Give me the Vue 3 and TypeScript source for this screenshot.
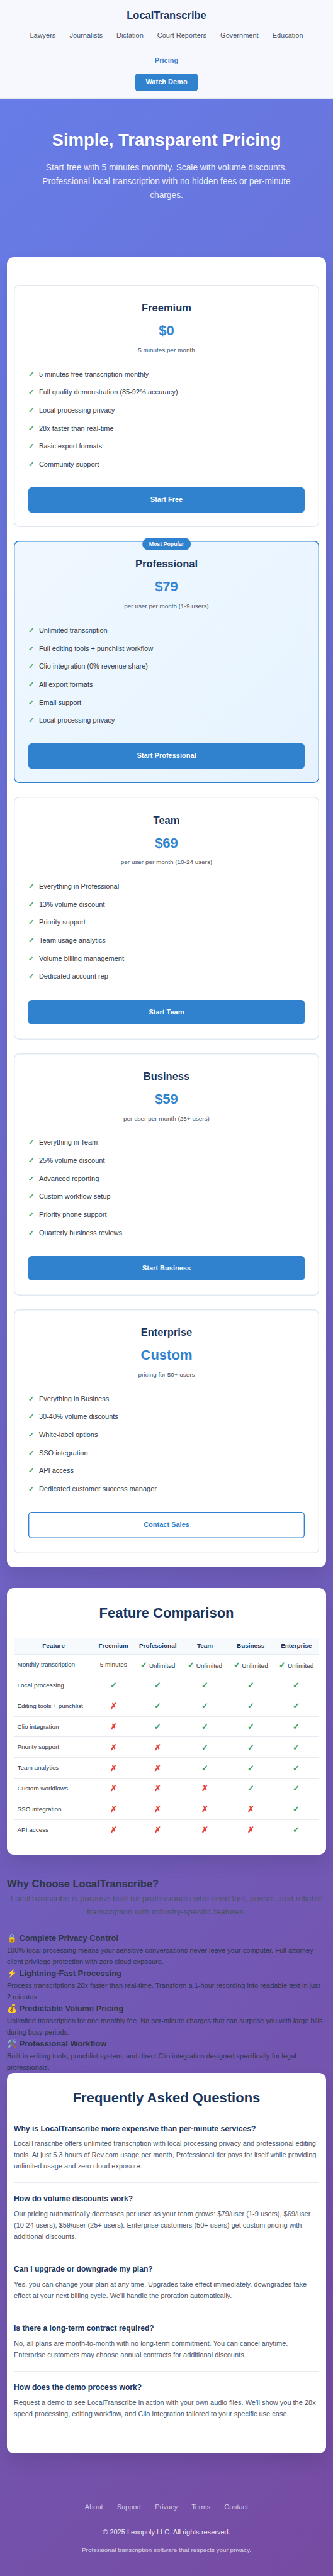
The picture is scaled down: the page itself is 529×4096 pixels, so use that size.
<script setup lang="ts">
interface Plan {
  name: string
  price: string
  period: string
  features: string[]
  cta: string
  popular?: boolean
  outline?: boolean
}

type Mark = 'y' | 'n'

interface FeatureRow {
  label: string
  marks: Mark[]
}

const navLinks: string[] = ['Lawyers', 'Journalists', 'Dictation', 'Court Reporters', 'Government', 'Education']

const plans: Plan[] = [
  {
    name: 'Freemium',
    price: '$0',
    period: '5 minutes per month',
    features: [
      '5 minutes free transcription monthly',
      'Full quality demonstration (85-92% accuracy)',
      'Local processing privacy',
      '28x faster than real-time',
      'Basic export formats',
      'Community support',
    ],
    cta: 'Start Free',
  },
  {
    name: 'Professional',
    price: '$79',
    period: 'per user per month (1-9 users)',
    features: [
      'Unlimited transcription',
      'Full editing tools + punchlist workflow',
      'Clio integration (0% revenue share)',
      'All export formats',
      'Email support',
      'Local processing privacy',
    ],
    cta: 'Start Professional',
    popular: true,
  },
  {
    name: 'Team',
    price: '$69',
    period: 'per user per month (10-24 users)',
    features: [
      'Everything in Professional',
      '13% volume discount',
      'Priority support',
      'Team usage analytics',
      'Volume billing management',
      'Dedicated account rep',
    ],
    cta: 'Start Team',
  },
  {
    name: 'Business',
    price: '$59',
    period: 'per user per month (25+ users)',
    features: [
      'Everything in Team',
      '25% volume discount',
      'Advanced reporting',
      'Custom workflow setup',
      'Priority phone support',
      'Quarterly business reviews',
    ],
    cta: 'Start Business',
  },
  {
    name: 'Enterprise',
    price: 'Custom',
    period: 'pricing for 50+ users',
    features: [
      'Everything in Business',
      '30-40% volume discounts',
      'White-label options',
      'SSO integration',
      'API access',
      'Dedicated customer success manager',
    ],
    cta: 'Contact Sales',
    outline: true,
  },
]

const columns: string[] = ['Feature', 'Freemium', 'Professional', 'Team', 'Business', 'Enterprise']

const row = (label: string, marks: string): FeatureRow => ({ label, marks: marks.split('') as Mark[] })

const rows: FeatureRow[] = [
  row('Local processing', 'yyyyy'),
  row('Editing tools + punchlist', 'nyyyy'),
  row('Clio integration', 'nyyyy'),
  row('Priority support', 'nnyyy'),
  row('Team analytics', 'nnyyy'),
  row('Custom workflows', 'nnnyy'),
  row('SSO integration', 'nnnny'),
  row('API access', 'nnnny'),
]

const reasons = [
  {
    title: '🔒 Complete Privacy Control',
    lines: [
      '100% local processing means your sensitive conversations never leave your computer. Full attorney-',
      'client privilege protection with zero cloud exposure.',
    ],
  },
  {
    title: '⚡ Lightning-Fast Processing',
    lines: [
      'Process transcriptions 28x faster than real-time. Transform a 1-hour recording into readable text in just',
      '2 minutes.',
    ],
  },
  {
    title: '💰 Predictable Volume Pricing',
    lines: [
      'Unlimited transcription for one monthly fee. No per-minute charges that can surprise you with large bills',
      'during busy periods.',
    ],
  },
  {
    title: '🛠️ Professional Workflow',
    lines: [
      'Built-in editing tools, punchlist system, and direct Clio integration designed specifically for legal',
      'professionals.',
    ],
  },
]

const faqs = [
  {
    q: 'Why is LocalTranscribe more expensive than per-minute services?',
    lines: [
      'LocalTranscribe offers unlimited transcription with local processing privacy and professional editing',
      'tools. At just 5.3 hours of Rev.com usage per month, Professional tier pays for itself while providing',
      'unlimited usage and zero cloud exposure.',
    ],
  },
  {
    q: 'How do volume discounts work?',
    lines: [
      'Our pricing automatically decreases per user as your team grows: $79/user (1-9 users), $69/user',
      '(10-24 users), $59/user (25+ users). Enterprise customers (50+ users) get custom pricing with',
      'additional discounts.',
    ],
  },
  {
    q: 'Can I upgrade or downgrade my plan?',
    lines: [
      'Yes, you can change your plan at any time. Upgrades take effect immediately, downgrades take',
      "effect at your next billing cycle. We'll handle the proration automatically.",
    ],
  },
  {
    q: 'Is there a long-term contract required?',
    lines: [
      'No, all plans are month-to-month with no long-term commitment. You can cancel anytime.',
      'Enterprise customers may choose annual contracts for additional discounts.',
    ],
  },
  {
    q: 'How does the demo process work?',
    lines: [
      "Request a demo to see LocalTranscribe in action with your own audio files. We'll show you the 28x",
      'speed processing, editing workflow, and Clio integration tailored to your specific use case.',
    ],
  },
]

const footerLinks: string[] = ['About', 'Support', 'Privacy', 'Terms', 'Contact']
</script>

<template>
  <div class="page">
    <header class="header">
      <div class="logo">LocalTranscribe</div>
      <nav class="nav">
        <a v-for="link in navLinks" :key="link">{{ link }}</a>
        <a class="active">Pricing</a>
      </nav>
      <a class="demo">Watch Demo</a>
    </header>

    <section class="hero">
      <h1>Simple, Transparent Pricing</h1>
      <p>
        Start free with 5 minutes monthly. Scale with volume discounts.<br />
        Professional local transcription with no hidden fees or per-minute<br />
        charges.
      </p>
    </section>

    <section class="card plans">
      <article v-for="plan in plans" :key="plan.name" class="plan" :class="{ popular: plan.popular }">
        <span v-if="plan.popular" class="badge">Most Popular</span>
        <h3>{{ plan.name }}</h3>
        <div class="price">{{ plan.price }}</div>
        <div class="period">{{ plan.period }}</div>
        <ul>
          <li v-for="feature in plan.features" :key="feature"><span class="tick">✓</span>{{ feature }}</li>
        </ul>
        <a class="cta" :class="{ outline: plan.outline }">{{ plan.cta }}</a>
      </article>
    </section>

    <section class="card compare">
      <h2>Feature Comparison</h2>
      <table>
        <colgroup>
          <col class="c-feature" />
          <col class="c-free" />
          <col class="c-pro" />
          <col class="c-rest" />
          <col class="c-rest" />
          <col class="c-rest" />
        </colgroup>
        <thead>
          <tr>
            <th v-for="column in columns" :key="column">{{ column }}</th>
          </tr>
        </thead>
        <tbody>
          <tr>
            <td>Monthly transcription</td>
            <td>5 minutes</td>
            <td v-for="n in 4" :key="n"><span class="yes">✓</span> Unlimited</td>
          </tr>
          <tr v-for="r in rows" :key="r.label">
            <td>{{ r.label }}</td>
            <td v-for="(mark, i) in r.marks" :key="i">
              <span :class="mark === 'y' ? 'yes' : 'no'">{{ mark === 'y' ? '✓' : '✗' }}</span>
            </td>
          </tr>
        </tbody>
      </table>
    </section>

    <section class="why">
      <h2>Why Choose LocalTranscribe?</h2>
      <p class="lead">
        LocalTranscribe is purpose-built for professionals who need fast, private, and reliable<br />
        transcription with industry-specific features.
      </p>
      <div v-for="reason in reasons" :key="reason.title">
        <h3>{{ reason.title }}</h3>
        <p><span v-for="line in reason.lines" :key="line" class="line">{{ line }}</span></p>
      </div>
    </section>

    <section class="card faq">
      <h2>Frequently Asked Questions</h2>
      <div v-for="item in faqs" :key="item.q" class="item">
        <h3>{{ item.q }}</h3>
        <p><span v-for="line in item.lines" :key="line" class="line">{{ line }}</span></p>
      </div>
    </section>

    <footer class="footer">
      <nav>
        <a v-for="link in footerLinks" :key="link">{{ link }}</a>
      </nav>
      <p>© 2025 Lexopoly LLC. All rights reserved.</p>
      <p class="tagline">Professional transcription software that respects your privacy.</p>
    </footer>
  </div>
</template>

<style>
html {
  font-size: 11.0126px;
}

body {
  margin: 0;
}
</style>

<style scoped>
.page {
  box-sizing: border-box;
  height: 4096px;
  overflow: hidden;
  background: linear-gradient(135deg, #667eea 0%, #764ba2 100%);
  color: #2d3748;
  font-family: "Liberation Sans", Arial, sans-serif;
  font-size: 1rem;
  line-height: 1.6;
}

.page *,
.page *::before {
  box-sizing: border-box;
}

h1,
h2,
h3,
p,
ul {
  margin: 0;
  padding: 0;
}

.line {
  display: block;
  white-space: nowrap;
}

.header {
  display: flex;
  flex-direction: column;
  align-items: center;
  gap: 1rem;
  height: 14.2625rem;
  padding: 1rem 2rem;
  background: rgba(255, 255, 255, 0.95);
  border-bottom: 1px solid #e2e8f0;
}

.logo {
  color: #1a365d;
  font-size: 1.5rem;
  font-weight: 700;
}

.nav {
  display: flex;
  flex-wrap: wrap;
  justify-content: center;
  gap: 2rem;
  max-width: 44rem;
}

.nav a {
  color: #4a5568;
}

.nav a.active {
  color: #3182ce;
  font-weight: 600;
}

.demo {
  padding: 0.5rem 1.5rem;
  border-radius: 0.375rem;
  background: #3182ce;
  color: #fff;
  font-weight: 600;
}

.hero {
  height: 22.86rem;
  padding: 4rem 1rem 0;
  color: #fff;
  text-align: center;
}

.hero h1 {
  margin-bottom: 1rem;
  font-size: 2.5rem;
  text-shadow: 0 0.125rem 0.25rem rgba(0, 0, 0, 0.1);
}

.hero p {
  font-size: 1.25rem;
  opacity: 0.9;
  white-space: nowrap;
}

.card {
  margin: 0 1rem;
  padding: 2rem 1rem;
  border-radius: 1rem;
  background: #fff;
  box-shadow: 0 1.25rem 2.5rem rgba(0, 0, 0, 0.1);
}

.card h2 {
  margin-bottom: 2rem;
  color: #1a365d;
  font-size: 2rem;
  text-align: center;
}

.plans {
  display: flex;
  flex-direction: column;
  gap: 2rem;
  padding-top: 4rem;
}

.plan {
  position: relative;
  height: 34.98rem;
  padding: 2.125rem;
  border-radius: 0.75rem;
  box-shadow: inset 0 0 0 0.125rem #e2e8f0;
  text-align: center;
}

.plan:last-child {
  height: 35.23rem;
}

.plan.popular {
  background: linear-gradient(135deg, #f0f8ff 0%, #e6f3ff 100%);
  box-shadow: inset 0 0 0 0.125rem #3182ce;
}

.badge {
  position: absolute;
  top: -0.5rem;
  left: 50%;
  padding: 0.3rem 1rem;
  border-radius: 0.9375rem;
  background: #3182ce;
  color: #fff;
  font-size: 0.8rem;
  font-weight: 600;
  white-space: nowrap;
  transform: translateX(-50%);
}

.plan h3 {
  margin-bottom: 0.5rem;
  color: #1a365d;
  font-size: 1.5rem;
}

.price {
  margin-bottom: 0.5rem;
  color: #3182ce;
  font-size: 2rem;
  font-weight: 700;
}

.period {
  margin-bottom: 1.5rem;
  color: #4a5568;
  font-size: 0.9rem;
}

.plan ul {
  margin-bottom: 2rem;
  list-style: none;
  text-align: left;
}

.plan li {
  display: flex;
  height: 2.6rem;
  padding: 0.5rem 0;
}

.tick {
  width: 1.5rem;
  color: #38a169;
  font-weight: 700;
}

.cta {
  display: block;
  padding: 1rem;
  border-radius: 0.5rem;
  background: #3182ce;
  color: #fff;
  font-weight: 600;
}

.cta.outline {
  padding: 1.125rem;
  background: #fff;
  box-shadow: inset 0 0 0 0.125rem #3182ce;
  color: #3182ce;
}

.compare {
  height: 38.49rem;
  margin-top: 3rem;
}

table {
  width: 100%;
  border-collapse: separate;
  border-spacing: 0;
  font-size: 0.9rem;
  table-layout: fixed;
}

.c-feature {
  width: 11.46rem;
}

.c-free {
  width: 5.81rem;
}

.c-pro {
  width: 7rem;
}

th,
td {
  height: 2.979rem;
  padding: 0;
  border-bottom: 1px solid #e6ebf2;
  text-align: center;
  vertical-align: middle;
  white-space: nowrap;
}

th {
  height: 2.47rem;
  background: #f7fafc;
  color: #1a365d;
}

td:first-child {
  padding-left: 0.5rem;
  text-align: left;
}

.yes,
.no {
  font-size: 1.2rem;
  font-weight: 700;
}

.yes {
  color: #38a169;
}

.no {
  color: #e53e3e;
}

.why {
  height: 28.57rem;
  margin: 3rem 1rem 0;
}

.why h2 {
  font-size: 1.5rem;
}

.lead {
  margin-bottom: 2rem;
  color: #4a5568;
  font-size: 1.2rem;
  text-align: center;
  white-space: nowrap;
}

.why h3 {
  height: 1.884rem;
  font-size: 1.17rem;
}

.faq {
  height: 54.93rem;
}

.item {
  margin-bottom: 1.5rem;
  padding-bottom: 1.5rem;
  border-bottom: 1px solid #e6ebf2;
}

.item:last-child {
  border-bottom: 0;
}

.item h3 {
  margin-bottom: 0.5rem;
  color: #1a365d;
  font-size: 1.1rem;
}

.item p {
  color: #4a5568;
}

.footer {
  padding: 7rem 1rem 0;
  color: #fff;
  text-align: center;
}

.footer nav {
  display: flex;
  justify-content: center;
  gap: 2rem;
  margin-bottom: 2rem;
}

.footer a {
  color: rgba(255, 255, 255, 0.7);
}

.footer p {
  opacity: 0.9;
}

.footer p.tagline {
  margin-top: 1rem;
  font-size: 0.9rem;
  opacity: 0.7;
}
</style>
